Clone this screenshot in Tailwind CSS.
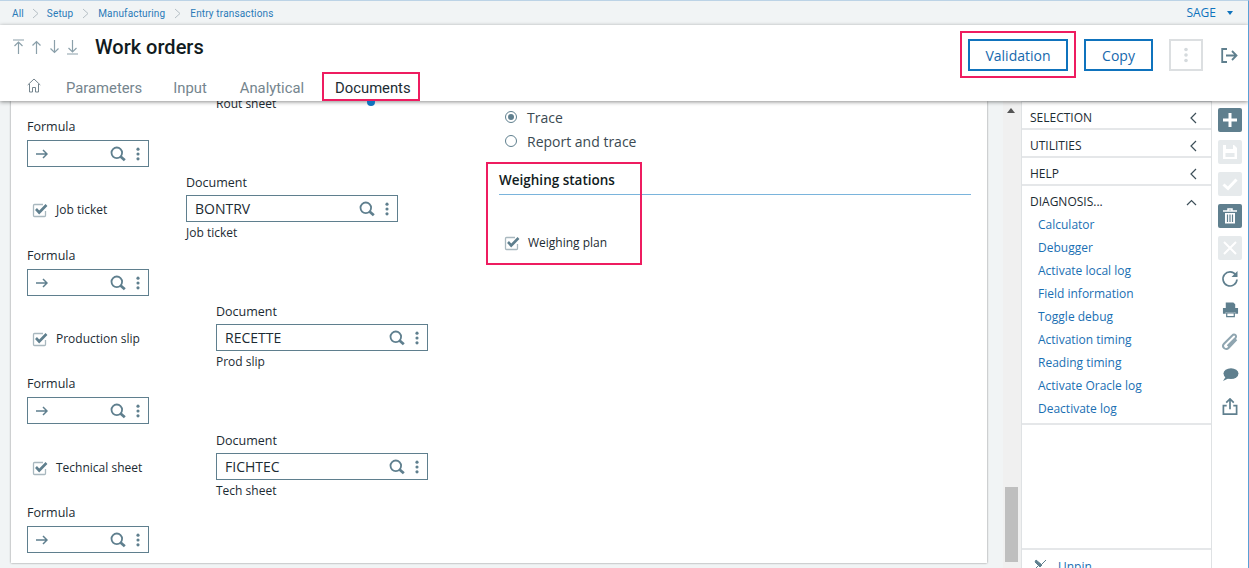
<!DOCTYPE html>
<html lang="en">
<head>
<meta charset="UTF-8" />
<title>Work orders</title>
<script src="https://cdn.jsdelivr.net/npm/@tailwindcss/browser@4"></script>
</head>
<body class="font-['Open_Sans',sans-serif]">
<svg class="hidden">
  <symbol id="search" viewBox="0 0 16 16"><circle cx="6.800" cy="6.800" r="5.300" fill="none" stroke="currentColor" stroke-width="1.800"/><path d="M10.500 10.500l4.300 3.800" stroke="currentColor" stroke-width="2.800"/></symbol>
  <symbol id="dots" viewBox="0 0 4 16"><circle cx="2" cy="2.500" r="1.800" fill="currentColor"/><circle cx="2" cy="8" r="1.800" fill="currentColor"/><circle cx="2" cy="13.500" r="1.800" fill="currentColor"/></symbol>
  <symbol id="arrow" viewBox="0 0 12 10"><path d="M0 5h11M7 1l4 4-4 4" fill="none" stroke="currentColor" stroke-width="1.500"/></symbol>
  <symbol id="check" viewBox="0 0 16 16"><path d="M11 2.500H2.500a1 1 0 0 0-1 1v10a1 1 0 0 0 1 1h10a1 1 0 0 0 1-1V9" fill="none" stroke="#a9b8bf" stroke-width="1.300"/><path d="M4 7l3.200 3.500L14.500 3" fill="none" stroke="#5f7f8e" stroke-width="2.600"/></symbol>
</svg>

<div class="relative w-[1249px] h-[568px] overflow-hidden flex flex-col bg-[#f1f4f5] border-t border-r border-t-[#bcd3e6] border-r-[#5aa0d6] text-[#1c2b33]">

  <!-- breadcrumb -->
  <div class="h-6 shrink-0 flex items-center justify-between pl-3 pr-[15px] text-[10px] text-[#2a7ab8] font-['Roboto',sans-serif] tracking-[0.15px]">
    <div class="flex items-center">
      <span>All</span>
      <svg class="w-[7px] h-[11px] mx-[8px] text-[#b5bfc5]" viewBox="0 0 7 11"><path d="M1 1l5 4.500L1 10" fill="none" stroke="currentColor"/></svg>
      <span>Setup</span>
      <svg class="w-[7px] h-[11px] mx-[9px] text-[#b5bfc5]" viewBox="0 0 7 11"><path d="M1 1l5 4.500L1 10" fill="none" stroke="currentColor"/></svg>
      <span>Manufacturing</span>
      <svg class="w-[7px] h-[11px] mx-[9px] text-[#b5bfc5]" viewBox="0 0 7 11"><path d="M1 1l5 4.500L1 10" fill="none" stroke="currentColor"/></svg>
      <span>Entry transactions</span>
    </div>
    <div class="flex items-center gap-[11px] text-[12px] text-[#0f73bd] font-['Open_Sans',sans-serif] tracking-normal">
      <span>SAGE</span>
      <span class="w-0 h-0 border-x-[3.500px] border-x-transparent border-t-[4px] border-t-[#0f73bd]"></span>
    </div>
  </div>

  <!-- header -->
  <header class="relative z-10 h-[76px] shrink-0 bg-white shadow-[0_1px_4px_rgba(0,0,0,0.45)]">
    <div class="flex items-start justify-between h-[47px]">
      <div class="flex items-center pl-[13px] pt-[10px]">
        <div class="flex items-center gap-[7px] text-[#8ba0aa]">
          <svg class="w-[11px] h-[16px]" viewBox="0 0 11 16"><path d="M0 1h11M5.500 15V3M1.500 7l4-4 4 4" fill="none" stroke="currentColor" stroke-width="1.200"/></svg>
          <svg class="w-[11px] h-[14px]" viewBox="0 0 11 14"><path d="M5.500 14V1.500M1.500 5.500l4-4 4 4" fill="none" stroke="currentColor" stroke-width="1.200"/></svg>
          <svg class="w-[11px] h-[14px]" viewBox="0 0 11 14"><path d="M5.500 0v12.500M1.500 8.500l4 4 4-4" fill="none" stroke="currentColor" stroke-width="1.200"/></svg>
          <svg class="w-[11px] h-[16px]" viewBox="0 0 11 16"><path d="M0 15h11M5.500 1v12M1.500 9l4 4 4-4" fill="none" stroke="currentColor" stroke-width="1.200"/></svg>
        </div>
        <h1 class="ml-[17px] text-[20px] leading-6 font-medium text-[#111b21] font-['Roboto',sans-serif]">Work orders</h1>
      </div>
      <div class="flex items-center pt-[14px] pr-[10px]">
        <button class="h-[32px] w-[100px] border-2 border-[#0f73bd] text-[14px] font-medium text-[#1568ad]">Validation</button>
        <button class="h-[32px] w-[69px] ml-4 border-2 border-[#0f73bd] text-[14px] font-medium text-[#1568ad]">Copy</button>
        <div class="h-[32px] w-[34px] ml-4 border-2 border-[#dcdfe1] flex items-center justify-center text-[#d5dadd]">
          <svg class="w-1 h-4"><use href="#dots"/></svg>
        </div>
        <svg class="w-[17px] h-[15px] ml-[18px] text-[#5f7f8e]" viewBox="0 0 17 15"><path d="M6 1H1.200v13H6" fill="none" stroke="currentColor" stroke-width="1.800"/><path d="M5 7.500h10M11 3l4.500 4.500L11 12" fill="none" stroke="currentColor" stroke-width="1.800"/></svg>
      </div>
    </div>
    <nav class="flex items-center h-[29px] pl-[27px] pt-[4px] text-[14.800px] text-[#75858e] font-['Roboto',sans-serif]">
      <svg class="w-[14px] h-[15px] mb-[6px] text-[#75858e]" viewBox="0 0 14 15"><path d="M.7 7L7 1l6.300 6M2.500 6v8h3V9.500h3V14h3V6" fill="none" stroke="currentColor"/></svg>
      <span class="ml-[25px]">Parameters</span>
      <span class="ml-[31px]">Input</span>
      <span class="ml-[33px]">Analytical</span>
      <span class="ml-[31px] text-[#1c2b33]">Documents</span>
    </nav>
  </header>

  <!-- body -->
  <div class="flex flex-1 min-h-0">
    <main class="relative w-[976px] ml-[11px] h-[462px] bg-white shadow-[0_0_2px_rgba(0,0,0,0.45)] flex overflow-hidden text-[12px]">
      <div class="w-[472px] pl-4 -mt-[5px]">
        <div class="pl-[189px] h-[22px] text-[12px] leading-4">Rout sheet</div>

        <div class="text-[12.500px] leading-4 mt-[-9px] pt-[10px]">Formula</div>
        <div class="mt-[5px] w-[122px] h-[27px] border border-[#5f7f8e] flex items-center pl-2 pr-2 text-[#5f7f8e]">
          <svg class="w-3 h-[10px]"><use href="#arrow"/></svg>
          <svg class="w-4 h-4 ml-auto"><use href="#search"/></svg>
          <svg class="w-1 h-[14px] ml-[10px]"><use href="#dots"/></svg>
        </div>

        <section class="flex mt-[7px] h-[74px]">
          <div class="w-[159px] pl-[5px] pt-[27px] flex items-center gap-[8px] self-start text-[12px]">
            <svg class="w-4 h-4 shrink-0"><use href="#check"/></svg><span>Job ticket</span>
          </div>
          <div class="w-[212px]">
            <div class="text-[12.500px] leading-[18px]">Document</div>
            <div class="mt-[3px] h-[27px] border border-[#5f7f8e] flex items-center pl-2 pr-2 text-[#5f7f8e]">
              <span class="text-[14px] text-[#1c2b33]">BONTRV</span>
              <svg class="w-4 h-4 ml-auto"><use href="#search"/></svg>
              <svg class="w-1 h-[14px] ml-[10px]"><use href="#dots"/></svg>
            </div>
            <div class="mt-[3px] text-[12px] leading-4">Job ticket</div>
          </div>
        </section>
        <div class="text-[12.500px] leading-4">Formula</div>
        <div class="mt-[5px] w-[122px] h-[27px] border border-[#5f7f8e] flex items-center pl-2 pr-2 text-[#5f7f8e]">
          <svg class="w-3 h-[10px]"><use href="#arrow"/></svg>
          <svg class="w-4 h-4 ml-auto"><use href="#search"/></svg>
          <svg class="w-1 h-[14px] ml-[10px]"><use href="#dots"/></svg>
        </div>

        <section class="flex mt-[7px] h-[73px]">
          <div class="w-[189px] pl-[5px] pt-[27px] flex items-center gap-[8px] self-start text-[12px]">
            <svg class="w-4 h-4 shrink-0"><use href="#check"/></svg><span>Production slip</span>
          </div>
          <div class="w-[212px]">
            <div class="text-[12.500px] leading-[18px]">Document</div>
            <div class="mt-[3px] h-[27px] border border-[#5f7f8e] flex items-center pl-2 pr-2 text-[#5f7f8e]">
              <span class="text-[14px] text-[#1c2b33]">RECETTE</span>
              <svg class="w-4 h-4 ml-auto"><use href="#search"/></svg>
              <svg class="w-1 h-[14px] ml-[10px]"><use href="#dots"/></svg>
            </div>
            <div class="mt-[3px] text-[12px] leading-4">Prod slip</div>
          </div>
        </section>
        <div class="text-[12.500px] leading-4">Formula</div>
        <div class="mt-[5px] w-[122px] h-[27px] border border-[#5f7f8e] flex items-center pl-2 pr-2 text-[#5f7f8e]">
          <svg class="w-3 h-[10px]"><use href="#arrow"/></svg>
          <svg class="w-4 h-4 ml-auto"><use href="#search"/></svg>
          <svg class="w-1 h-[14px] ml-[10px]"><use href="#dots"/></svg>
        </div>

        <section class="flex mt-[8px] h-[73px]">
          <div class="w-[189px] pl-[5px] pt-[27px] flex items-center gap-[8px] self-start text-[12px]">
            <svg class="w-4 h-4 shrink-0"><use href="#check"/></svg><span>Technical sheet</span>
          </div>
          <div class="w-[212px]">
            <div class="text-[12.500px] leading-[18px]">Document</div>
            <div class="mt-[3px] h-[27px] border border-[#5f7f8e] flex items-center pl-2 pr-2 text-[#5f7f8e]">
              <span class="text-[14px] text-[#1c2b33]">FICHTEC</span>
              <svg class="w-4 h-4 ml-auto"><use href="#search"/></svg>
              <svg class="w-1 h-[14px] ml-[10px]"><use href="#dots"/></svg>
            </div>
            <div class="mt-[3px] text-[12px] leading-4">Tech sheet</div>
          </div>
        </section>
        <div class="text-[12.500px] leading-4">Formula</div>
        <div class="mt-[5px] w-[122px] h-[27px] border border-[#5f7f8e] flex items-center pl-2 pr-2 text-[#5f7f8e]">
          <svg class="w-3 h-[10px]"><use href="#arrow"/></svg>
          <svg class="w-4 h-4 ml-auto"><use href="#search"/></svg>
          <svg class="w-1 h-[14px] ml-[10px]"><use href="#dots"/></svg>
        </div>
      </div>

      <div class="w-[488px] pl-4 pt-[4px]">
        <div class="flex items-center gap-[10px] pl-[6px] h-6 text-[14px] text-[#3b4a52]">
          <span class="w-3 h-3 rounded-full border border-[#5f7f8e] flex items-center justify-center"><span class="w-[6px] h-[6px] rounded-full bg-[#5f7f8e]"></span></span>Trace
        </div>
        <div class="flex items-center gap-[10px] pl-[6px] h-6 text-[14px] text-[#3b4a52]">
          <span class="w-3 h-3 rounded-full border border-[#5f7f8e]"></span>Report and trace
        </div>
        <h2 class="mt-[17px] pb-[4px] text-[13.500px] leading-5 font-semibold text-[#111b21] border-b border-[#7ab4dc]">Weighing stations</h2>
        <div class="mt-[39px] pl-[5px] flex items-center gap-[8px] text-[12px]">
          <svg class="w-4 h-4"><use href="#check"/></svg><span>Weighing plan</span>
        </div>
      </div>
    </main>

    <!-- scroll track -->
    <div class="relative w-[18px] ml-[16px] bg-[#f0f0f0]">
      <span class="absolute left-[4px] top-[7px] w-0 h-0 border-x-[4px] border-x-transparent border-b-[5px] border-b-[#555]"></span>
      <div class="absolute left-[2px] top-[386px] h-[75px] w-[13px] bg-[#bfbfbf]"></div>
    </div>

    <!-- side panel -->
    <aside class="w-[191px] bg-white border-x border-t border-[#dfe2e4] flex flex-col text-[12px]">
      <div class="h-[28px] pt-[6px] border-b-2 border-[#e5e7e9] flex items-center justify-between pl-2 pr-[14px]"><span>SELECTION</span><svg class="w-[7px] h-3" viewBox="0 0 7 12"><path d="M6 1L1 6l5 5" fill="none" stroke="#3d4f59" stroke-width="1.200"/></svg></div>
      <div class="h-[28px] pt-[6px] border-b-2 border-[#e5e7e9] flex items-center justify-between pl-2 pr-[14px]"><span>UTILITIES</span><svg class="w-[7px] h-3" viewBox="0 0 7 12"><path d="M6 1L1 6l5 5" fill="none" stroke="#3d4f59" stroke-width="1.200"/></svg></div>
      <div class="h-[28px] pt-[6px] border-b-2 border-[#e5e7e9] flex items-center justify-between pl-2 pr-[14px]"><span>HELP</span><svg class="w-[7px] h-3" viewBox="0 0 7 12"><path d="M6 1L1 6l5 5" fill="none" stroke="#3d4f59" stroke-width="1.200"/></svg></div>
      <div class="h-[27px] pt-[5px] flex items-center justify-between pl-2 pr-[14px]"><span>DIAGNOSIS...</span><svg class="w-[11px] h-[7px]" viewBox="0 0 11 7"><path d="M1 6l4.500-4.500L10 6" fill="none" stroke="#3d4f59" stroke-width="1.200"/></svg></div>
      <ul class="pl-4 pb-[3px] border-b-2 border-[#e5e7e9] text-[#1a6fb3]">
        <li class="h-[23px] leading-[23px]">Calculator</li>
        <li class="h-[23px] leading-[23px]">Debugger</li>
        <li class="h-[23px] leading-[23px]">Activate local log</li>
        <li class="h-[23px] leading-[23px]">Field information</li>
        <li class="h-[23px] leading-[23px]">Toggle debug</li>
        <li class="h-[23px] leading-[23px]">Activation timing</li>
        <li class="h-[23px] leading-[23px]">Reading timing</li>
        <li class="h-[23px] leading-[23px]">Activate Oracle log</li>
        <li class="h-[23px] leading-[23px]">Deactivate log</li>
      </ul>
      <div class="mt-auto h-[20px] border-t-2 border-[#e5e7e9] flex pl-[11px] pt-[9px] gap-[11px] text-[#1a6fb3]">
        <svg class="w-[14px] h-[12px] shrink-0 text-[#5f7f8e]" viewBox="0 0 14 12"><path d="M3 1l6 5-2 2-5-5zM1 11l4-4M9 5l4-4" fill="currentColor" stroke="currentColor"/></svg>
        <span class="leading-4">Unpin</span>
      </div>
    </aside>

    <!-- action bar -->
    <div class="w-[36px] bg-white flex flex-col items-center pt-[7px] gap-2">
      <div class="w-6 h-6 shrink-0 rounded-[2px] bg-[#5f7f8e] flex items-center justify-center"><svg class="w-4 h-4" viewBox="0 0 16 16"><path d="M8 1v14M1 8h14" stroke="#fff" stroke-width="3"/></svg></div>
      <div class="w-6 h-6 shrink-0 rounded-[2px] bg-[#e6eaec] flex items-center justify-center"><svg class="w-4 h-4" viewBox="0 0 16 16"><path d="M1 1h11l3 3v11H1z" fill="#fff"/><path d="M4 1h7v4H4zM3.500 9h9v4h-9z" fill="#e6eaec"/></svg></div>
      <div class="w-6 h-6 shrink-0 rounded-[2px] bg-[#e6eaec] flex items-center justify-center"><svg class="w-4 h-4" viewBox="0 0 16 16"><path d="M1.500 8.500l4.500 4L14.500 3.500" fill="none" stroke="#fff" stroke-width="3"/></svg></div>
      <div class="w-6 h-6 shrink-0 rounded-[2px] bg-[#5f7f8e] flex items-center justify-center"><svg class="w-[14px] h-4" viewBox="0 0 14 16"><path d="M0 3h14M5 3V1h4v2" fill="none" stroke="#fff" stroke-width="1.500"/><path d="M2 5h10v10.500H2z" fill="#fff"/><path d="M4.500 6.500v7.500M7 6.500v7.500M9.500 6.500v7.500" stroke="#5f7f8e" stroke-width="1.200"/></svg></div>
      <div class="w-6 h-6 shrink-0 rounded-[2px] bg-[#e6eaec] flex items-center justify-center"><svg class="w-4 h-4" viewBox="0 0 16 16"><path d="M2 2l12 12M14 2L2 14" stroke="#fff" stroke-width="2"/></svg></div>
      <div class="w-6 h-6 shrink-0 -mt-px flex items-center justify-center text-[#5f7f8e]"><svg class="w-[18px] h-[18px]" viewBox="0 0 18 18"><path d="M14.800 5A7 7 0 1 0 16 9.500" fill="none" stroke="currentColor" stroke-width="1.700"/><path d="M16.500 1v6h-6z" fill="currentColor"/></svg></div>
      <div class="w-6 h-6 shrink-0 -mt-px flex items-center justify-center text-[#5f7f8e]"><svg class="w-[17px] h-[16px]" viewBox="0 0 18 16"><path d="M4 0h8l2 2v4H4z" fill="currentColor"/><path d="M1 6h16v6h-3v-2H4v2H1z" fill="currentColor"/><path d="M5 11h8v4H5z" fill="none" stroke="currentColor" stroke-width="1.300"/></svg></div>
      <div class="w-6 h-6 shrink-0 flex items-center justify-center text-[#8fa5b0]"><svg class="w-[18px] h-[18px]" viewBox="0 0 18 18"><path d="M15.500 6.500L7.500 15a3 3 0 0 1-4.500-4.300l8.500-8.500a2 2 0 0 1 3 2.800L6.500 13" fill="none" stroke="currentColor" stroke-width="2"/></svg></div>
      <div class="w-6 h-6 shrink-0 flex items-center justify-center text-[#5f7f8e]"><svg class="w-[17px] h-[15px]" viewBox="0 0 18 16"><ellipse cx="9.500" cy="7" rx="8" ry="5.800" fill="currentColor"/><path d="M4 10L1 15l6-3z" fill="currentColor"/></svg></div>
      <div class="w-6 h-6 shrink-0 flex items-center justify-center text-[#5f7f8e]"><svg class="w-4 h-[17px]" viewBox="0 0 16 18"><path d="M8 12V2M4 5l4-4 4 4" fill="none" stroke="currentColor" stroke-width="1.800"/><path d="M4.500 8H1v9h14V8h-3.500" fill="none" stroke="currentColor" stroke-width="1.800"/></svg></div>
    </div>
  </div>

  <!-- blue tab marker -->
  <span class="absolute z-20 left-[367px] top-[97px] w-2 h-2 rounded-full bg-[#0f73bd] [clip-path:inset(3px_0_0_0)]"></span>

  <!-- annotation frames -->
  <div class="absolute z-30 left-[322px] top-[71px] w-[98px] h-[29px] border-[2px] border-[#ee1c60]"></div>
  <div class="absolute z-30 left-[960px] top-[30px] w-[116px] h-[47px] border-[2px] border-[#ee1c60]"></div>
  <div class="absolute z-30 left-[486px] top-[161px] w-[156px] h-[103px] border-[2px] border-[#ee1c60]"></div>
</div>
</body>
</html>
